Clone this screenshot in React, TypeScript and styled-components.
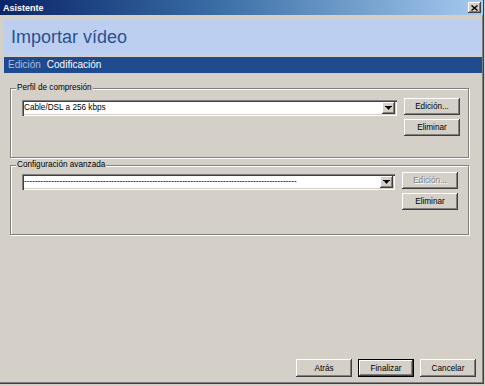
import React from "react";
import styled, { createGlobalStyle } from "styled-components";

const Global = createGlobalStyle`
  html, body { margin: 0; padding: 0; background: #d4d0c8; }
  body { font-family: "Liberation Sans", Arial, sans-serif; }
  * { box-sizing: border-box; }
`;

const Window = styled.div`
  width: 485px;
  height: 386px;
  padding: 0 1px 2px 0;
  background: #d4d0c8;
  display: flex;
`;

const Body = styled.div`
  flex: 1;
  display: flex;
  flex-direction: column;
  border-right: 1px solid #404040;
  border-bottom: 1px solid #404040;
  box-shadow: inset -1px -1px 0 #808080;
`;

const TitleBar = styled.div`
  height: 15px;
  display: flex;
  align-items: center;
  justify-content: space-between;
  padding: 0 2px 0 3px;
  background: linear-gradient(90deg, #0a246a 0%, #3a6ea5 45%, #a6caf0 100%);
  color: #fff;
  font-weight: bold;
  font-size: 9px;
`;

const CloseBox = styled.div`
  width: 13px;
  height: 11px;
  background: #d4d0c8;
  display: flex;
  align-items: center;
  justify-content: center;
  box-shadow: inset -1px -1px 0 #404040, inset 1px 1px 0 #fff, inset -2px -2px 0 #808080;
`;

const Header = styled.div`
  margin: 4px 1px 0 4px;
  height: 36px;
  background: #bccff0;
  color: #2c4f90;
  font-size: 18px;
  line-height: 36px;
  padding-left: 7px;
`;

const Nav = styled.div`
  margin: 2px 1px 0 4px;
  height: 16px;
  background: #1f4a8e;
  display: flex;
  gap: 6px;
  padding-left: 4px;
  font-size: 10px;
  line-height: 16px;
`;

const NavItem = styled.span<{ $active?: boolean }>`
  color: ${(p) => (p.$active ? "#ffffff" : "#a9bde3")};
`;

const Groups = styled.div`
  display: flex;
  flex-direction: column;
  gap: 7px;
  padding: 15px 14px 0 10px;
`;

const Group = styled.div<{ $top: number; $right: number }>`
  position: relative;
  height: 70px;
  border: 1px solid #808080;
  box-shadow: inset 1px 1px 0 #fff, 1px 1px 0 #fff;
  display: flex;
  align-items: flex-start;
  gap: 7px;
  padding: ${(p) => p.$top}px ${(p) => p.$right}px 0 11px;
`;

const Legend = styled.span`
  position: absolute;
  top: -6px;
  left: 5px;
  padding: 0 1px;
  background: #d4d0c8;
  font-size: 8.2px;
  line-height: 10px;
  color: #000;
`;

const Combo = styled.div`
  flex: 1;
  margin-top: 2px;
  height: 16px;
  background: #fff;
  display: flex;
  align-items: center;
  padding: 2px 2px 2px 2px;
  box-shadow: inset 1px 1px 0 #808080, inset 2px 2px 0 #404040, inset -1px -1px 0 #fff,
    inset -2px -2px 0 #d4d0c8;
  font-size: 8.2px;
  color: #000;
`;

const ComboText = styled.span`
  flex: 1;
  overflow: hidden;
  white-space: nowrap;
  line-height: 12px;
`;

const ArrowBtn = styled.div`
  width: 13px;
  height: 12px;
  background: #d4d0c8;
  display: flex;
  align-items: center;
  justify-content: center;
  box-shadow: inset -1px -1px 0 #404040, inset 1px 1px 0 #fff, inset -2px -2px 0 #808080;
`;

const ButtonCol = styled.div`
  display: flex;
  flex-direction: column;
  gap: 4px;
`;

const Button = styled.div<{ $disabled?: boolean; $default?: boolean; $h?: number }>`
  width: 56px;
  height: ${(p) => p.$h ?? 17}px;
  background: #d4d0c8;
  display: flex;
  align-items: center;
  justify-content: center;
  font-size: 8.2px;
  color: ${(p) => (p.$disabled ? "#808080" : "#000")};
  text-shadow: ${(p) => (p.$disabled ? "1px 1px 0 #fff" : "none")};
  border: ${(p) => (p.$default ? "1px solid #000" : "none")};
  box-shadow: inset -1px -1px 0 #404040, inset 1px 1px 0 #fff, inset -2px -2px 0 #808080;
`;

const Footer = styled.div`
  margin-top: auto;
  display: flex;
  justify-content: flex-end;
  gap: 6px;
  padding: 0 7px 6px 0;
`;

const Arrow = () => (
  <svg width="7" height="5" viewBox="0 0 7 5">
    <rect x="0" y="0" width="7" height="1" fill="#000" />
    <polygon points="1,1 6,1 3.5,4" fill="#000" />
  </svg>
);

const CloseGlyph = () => (
  <svg width="7" height="6" viewBox="0 0 7 6">
    <path d="M0.5 0.5 L6.5 5.5 M6.5 0.5 L0.5 5.5" stroke="#000" strokeWidth="1.4" />
  </svg>
);

export default function App() {
  const dashes = "-".repeat(100);
  return (
    <>
      <Global />
      <Window>
        <Body>
          <TitleBar>
            <span>Asistente</span>
            <CloseBox>
              <CloseGlyph />
            </CloseBox>
          </TitleBar>
          <Header>Importar vídeo</Header>
          <Nav>
            <NavItem>Edición</NavItem>
            <NavItem $active>Codificación</NavItem>
          </Nav>
          <Groups>
            <Group $top={9} $right={8}>
              <Legend>Perfil de compresión</Legend>
              <Combo>
                <ComboText>Cable/DSL a 256 kbps</ComboText>
                <ArrowBtn>
                  <Arrow />
                </ArrowBtn>
              </Combo>
              <ButtonCol>
                <Button>Edición...</Button>
                <Button>Eliminar</Button>
              </ButtonCol>
            </Group>
            <Group $top={6} $right={10}>
              <Legend>Configuración avanzada</Legend>
              <Combo>
                <ComboText>{dashes}</ComboText>
                <ArrowBtn>
                  <Arrow />
                </ArrowBtn>
              </Combo>
              <ButtonCol>
                <Button $disabled>Edición...</Button>
                <Button>Eliminar</Button>
              </ButtonCol>
            </Group>
          </Groups>
          <Footer>
            <Button $h={18}>Atrás</Button>
            <Button $h={18} $default>
              Finalizar
            </Button>
            <Button $h={18}>Cancelar</Button>
          </Footer>
        </Body>
      </Window>
    </>
  );
}
